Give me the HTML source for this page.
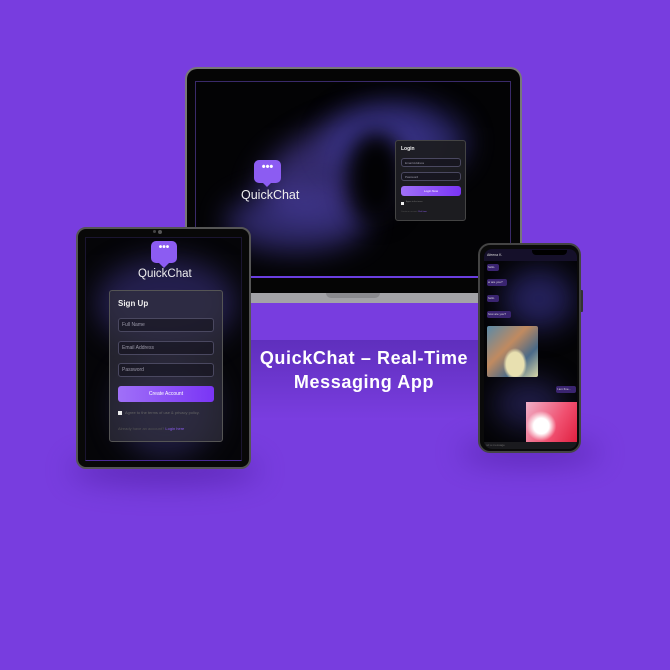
<!DOCTYPE html>
<html><head><meta charset="utf-8"><style>
*{margin:0;padding:0;box-sizing:border-box}
body{width:670px;height:670px;background:#783ddf;position:relative;overflow:hidden;font-family:"Liberation Sans",sans-serif}
.a{position:absolute}
.blob{position:absolute;border-radius:50%;filter:blur(14px)}
.inp{position:absolute;border:1px solid #4a4860;border-radius:3px;background:rgba(20,18,30,.6);color:#9a98a8;padding-left:3px}
.btn{position:absolute;border-radius:3px;background:linear-gradient(90deg,#a070f8,#7a35f5);color:#fff;text-align:center}
</style></head><body>
<div class="a" style="left:250px;top:340px;width:230px;height:80px;background:linear-gradient(180deg,#5f2fbd,#7a3de0)"></div>
<div class="a" style="left:178px;top:292px;width:340px;height:11px;background:#a3a3a7;border-radius:0 0 4px 4px"></div>
<div class="a" style="left:326px;top:292px;width:54px;height:6px;background:#8a8a8e;border-radius:0 0 5px 5px"></div>
<div class="a" style="left:185px;top:67px;width:337px;height:226px;background:#050505;border:2px solid #777;border-bottom:none;border-radius:12px 12px 0 0;overflow:hidden">
 <div class="a" style="left:8px;top:12px;width:316px;height:197px;border:1px solid #3a2a6a;border-bottom:2px solid #6a3ee0;overflow:hidden;background:#030305">
  <div class="blob" style="left:60px;top:40px;width:180px;height:90px;background:#4a3c9a;opacity:.7;transform:rotate(-20deg)"></div>
  <div class="blob" style="left:130px;top:20px;width:140px;height:80px;background:#3a3590;opacity:.7"></div>
  <div class="blob" style="left:30px;top:110px;width:140px;height:60px;background:#4a40a8;opacity:.6"></div>
  <div class="blob" style="left:150px;top:50px;width:60px;height:90px;background:#020204;filter:blur(10px)"></div>
  <div class="a" style="left:58px;top:78px;width:27px;height:23px;background:#8c5cf2;border-radius:5px;color:#fff;font-size:11px;text-align:center;line-height:15px;font-weight:bold">•••</div>
  <div class="a" style="left:66px;top:100px;width:0;height:0;border-left:5px solid transparent;border-right:5px solid transparent;border-top:5px solid #8c5cf2"></div>
  <div class="a" style="left:45px;top:106px;color:#eee;font-size:12.5px">QuickChat</div>
  <div class="a" style="left:199px;top:58px;width:71px;height:81px;background:rgba(30,30,34,.95);border:1px solid #444;border-radius:3px">
   <div class="a" style="left:5px;top:5px;color:#eee;font-size:5px;font-weight:bold">Login</div>
   <div class="inp" style="left:5px;top:17px;width:60px;height:9px;font-size:3px;line-height:8px">Email Address</div>
   <div class="inp" style="left:5px;top:31px;width:60px;height:9px;font-size:3px;line-height:8px">Password</div>
   <div class="btn" style="left:5px;top:45px;width:60px;height:10px;font-size:3px;line-height:10px">Login Now</div>
   <div class="a" style="left:5px;top:61px;width:3px;height:3px;background:#eee"></div>
   <div class="a" style="left:10px;top:60px;color:#777;font-size:2px">Agree to the terms</div>
   <div class="a" style="left:5px;top:70px;color:#555;font-size:2px">Create an account <span style="color:#8c5cf2">Click here</span></div>
  </div>
 </div>
</div>
<div class="blob" style="left:70px;top:455px;width:190px;height:30px;background:#4a1a9a;opacity:.55"></div>
<div class="blob" style="left:460px;top:440px;width:140px;height:25px;background:#4a1a9a;opacity:.55"></div>
<div class="a" style="left:76px;top:227px;width:175px;height:242px;background:#080808;border:2px solid #555;border-radius:10px;overflow:hidden">
 <div class="a" style="left:75px;top:1px;width:3px;height:3px;border-radius:50%;background:#444"></div>
 <div class="a" style="left:80px;top:1px;width:4px;height:4px;border-radius:50%;background:#555"></div>
 <div class="a" style="left:7px;top:8px;width:157px;height:224px;border:1px solid #1a1530;border-bottom:1px solid #4a2a9a;overflow:hidden;background:#050508">
  <div class="blob" style="left:10px;top:20px;width:140px;height:90px;background:#2c2660;opacity:.8"></div>
  <div class="blob" style="left:30px;top:120px;width:100px;height:100px;background:#2a2658;opacity:.7"></div>
  <div class="a" style="left:65px;top:3px;width:26px;height:22px;background:#8c5cf2;border-radius:5px;color:#fff;font-size:10px;text-align:center;line-height:14px;font-weight:bold">•••</div>
  <div class="a" style="left:73px;top:25px;border-left:5px solid transparent;border-right:5px solid transparent;border-top:5px solid #8c5cf2"></div>
  <div class="a" style="left:52px;top:30px;color:#eee;font-size:11.5px">QuickChat</div>
  <div class="a" style="left:23px;top:52px;width:114px;height:152px;background:rgba(50,48,62,.7);border:1px solid #555;border-radius:3px">
   <div class="a" style="left:8px;top:8px;color:#eee;font-size:8px;font-weight:bold">Sign Up</div>
   <div class="inp" style="left:8px;top:27px;width:96px;height:14px;font-size:5px;line-height:13px">Full Name</div>
   <div class="inp" style="left:8px;top:50px;width:96px;height:14px;font-size:5px;line-height:13px">Email Address</div>
   <div class="inp" style="left:8px;top:72px;width:96px;height:14px;font-size:5px;line-height:13px">Password</div>
   <div class="btn" style="left:8px;top:95px;width:96px;height:16px;font-size:5px;line-height:16px">Create Account</div>
   <div class="a" style="left:8px;top:120px;width:4px;height:4px;background:#eee"></div>
   <div class="a" style="left:15px;top:119px;color:#666;font-size:4px">Agree to the terms of use &amp; privacy policy.</div>
   <div class="a" style="left:8px;top:135px;color:#555;font-size:4px">Already have an account? <span style="color:#8c5cf2">Login here</span></div>
  </div>
 </div>
</div>
<div class="a" style="left:580px;top:290px;width:3px;height:22px;background:#333;border-radius:1px"></div>
<div class="a" style="left:478px;top:243px;width:103px;height:210px;background:#0a0a0a;border:2px solid #444;border-radius:12px;overflow:hidden">
 <div class="a" style="left:4px;top:4px;width:93px;height:200px;background:#040406;overflow:hidden;border-radius:8px">
  <div class="blob" style="left:20px;top:20px;width:70px;height:60px;background:#2c2870;opacity:.8"></div>
  <div class="blob" style="left:10px;top:130px;width:70px;height:50px;background:#2a2660;opacity:.7"></div>
  <div class="a" style="left:0;top:0;width:93px;height:12px;background:#15102a"></div>
  <div class="a" style="left:3px;top:4px;color:#ddd;font-size:3.5px">Afeena K.</div>
  <div class="a" style="left:48px;top:1px;width:35px;height:5px;background:#000;border-radius:0 0 4px 4px"></div>
  <div class="a" style="left:3px;top:15px;width:12px;height:7px;background:#3a2470;border-radius:2px;color:#ddd;font-size:3px;line-height:7px;padding-left:1px">hello.</div>
  <div class="a" style="left:3px;top:30px;width:20px;height:7px;background:#3a2470;border-radius:2px;color:#ddd;font-size:3px;line-height:7px;padding-left:1px">w are you?</div>
  <div class="a" style="left:3px;top:46px;width:12px;height:7px;background:#3a2470;border-radius:2px;color:#ddd;font-size:3px;line-height:7px;padding-left:1px">hello</div>
  <div class="a" style="left:3px;top:62px;width:24px;height:7px;background:#3a2470;border-radius:2px;color:#ddd;font-size:3px;line-height:7px;padding-left:1px">how are you?</div>
  <div class="a" style="left:3px;top:77px;width:51px;height:51px;border-radius:2px;background:radial-gradient(ellipse at 55% 75%,#e8e0b0 0 22%,transparent 30%),linear-gradient(135deg,#5a8aa8,#c08a60 40%,#4a6a88 70%,#d8d8a8)"></div>
  <div class="a" style="left:72px;top:137px;width:20px;height:7px;background:#3a2470;border-radius:2px;color:#ddd;font-size:3px;line-height:7px;padding-left:1px">I am fine...</div>
  <div class="a" style="left:42px;top:153px;width:51px;height:40px;background:radial-gradient(circle at 30% 60%,#fff 0 18%,transparent 35%),linear-gradient(120deg,#f0b0c8,#f05070 60%,#e02040)"></div>
  <div class="a" style="left:0;top:193px;width:93px;height:7px;background:#1a1a1e;color:#666;font-size:3px;line-height:7px;padding-left:2px">nd a message</div>
 </div>
</div>
<div class="a" style="left:240px;top:346px;width:248px;text-align:center;color:#fff;font-weight:bold;font-size:18px;letter-spacing:0.6px;line-height:24px">QuickChat – Real-Time<br>Messaging App</div>
</body></html>
